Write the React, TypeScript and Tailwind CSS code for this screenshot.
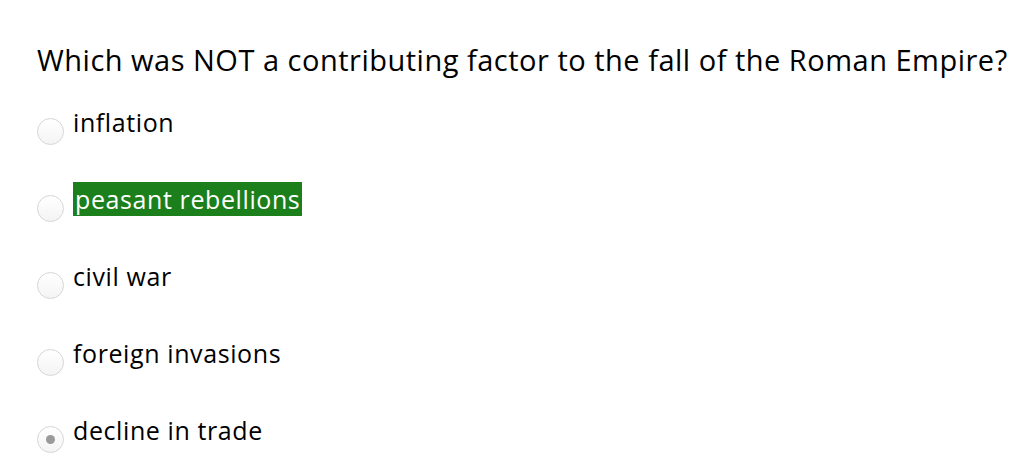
import React from 'react';

const options = [
  { label: 'inflation' },
  { label: 'peasant rebellions', highlight: true },
  { label: 'civil war' },
  { label: 'foreign invasions' },
  { label: 'decline in trade', checked: true },
];

const Radio: React.FC<{ checked?: boolean }> = ({ checked }) => (
  <span className="mt-[13px] flex h-[27px] w-[27px] shrink-0 items-center justify-center rounded-full border border-[#d6d6d6] bg-gradient-to-b from-white to-[#f4f4f4]">
    {checked && <span className="h-[9px] w-[9px] rounded-full bg-[#9a9a9a]" />}
  </span>
);

const App: React.FC = () => {
  return (
    <div className="h-[472px] w-[1036px] bg-white pl-[37px] pt-[40px] font-['Open_Sans',sans-serif] text-black">
      <h1 className="text-[29px] leading-[40px] tracking-[0.5px]">
        Which was NOT a contributing factor to the fall of the Roman Empire?
      </h1>
      <div className="mt-[25px] flex flex-col gap-[37px]">
        {options.map(o => (
          <label key={o.label} className="flex items-start gap-[9px]">
            <Radio checked={o.checked} />
            <span
              className={`text-[25px] leading-[34px] tracking-[0.6px] ${o.highlight ? 'bg-[#1b7f1b] px-[2px] text-white' : ''}`}
            >
              {o.label}
            </span>
          </label>
        ))}
      </div>
    </div>
  );
};

export default App;
